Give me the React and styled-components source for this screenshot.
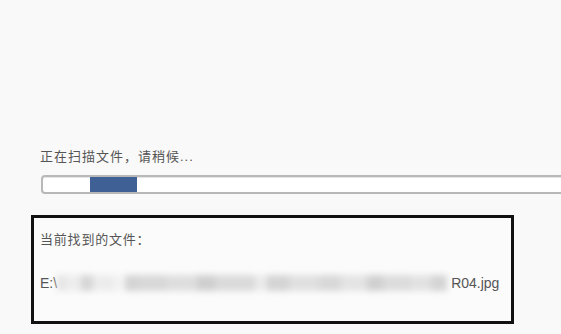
import React from 'react';
import styled, { createGlobalStyle } from 'styled-components';

const GlobalStyle = createGlobalStyle`
  html, body {
    margin: 0;
    padding: 0;
    background: #f9f9f9;
    overflow: hidden;
  }
  body {
    font-family: "Liberation Sans", "Noto Sans CJK SC", sans-serif;
  }
`;

const Page = styled.div`
  width: 561px;
  height: 334px;
  padding: 148px 0 0 31px;
  box-sizing: border-box;
  overflow: hidden;
`;

const StatusText = styled.div`
  margin-left: 9px;
  font-size: 13px;
  letter-spacing: 1px;
  line-height: 18px;
  color: #555;
`;

const Track = styled.div`
  position: relative;
  margin: 9px 0 0 10px;
  width: 560px;
  height: 19px;
  box-sizing: border-box;
  background: #fff;
  border: 2px solid #b8b8b8;
  border-radius: 4px;
  box-shadow: inset 0 1px 0 #e6e6e6;
`;

const Fill = styled.div`
  position: absolute;
  top: 0;
  bottom: 0;
  left: ${(p) => p.left}px;
  width: ${(p) => p.width}px;
  background: #3f6094;
`;

const FoundBox = styled.div`
  margin-top: 21px;
  width: 483px;
  height: 109px;
  box-sizing: border-box;
  border: 3px solid #111;
  background: #fbfbfb;
  padding: 13px 0 0 6px;
  color: #555;
  font-size: 13px;
`;

const Label = styled.div`
  line-height: 18px;
  letter-spacing: 0.8px;
`;

const PathRow = styled.div`
  margin-top: 23px;
  display: flex;
  align-items: center;
  height: 22px;
  font-size: 14px;
`;

const Blur = styled.div`
  display: flex;
  align-items: center;
  width: ${(p) => p.width}px;
  height: 22px;
  filter: blur(3px);
`;

const Blob = styled.span`
  display: block;
  height: ${(p) => p.h || 16}px;
  width: ${(p) => p.w}px;
  background: ${(p) => p.c};
`;

const blobs = [
  { w: 8, c: '#e4e4e4' },
  { w: 16, c: '#ededed' },
  { w: 12, c: '#d6d6d6' },
  { w: 22, c: '#ececec' },
  { w: 10, c: '#f4f4f4' },
  { w: 14, c: '#d4d4d4' },
  { w: 28, c: '#d8d8d8' },
  { w: 30, c: '#dedede' },
  { w: 18, c: '#cfcfcf' },
  { w: 40, c: '#dadada' },
  { w: 12, c: '#ebebeb' },
  { w: 22, c: '#d4d4d4' },
  { w: 30, c: '#e0e0e0' },
  { w: 22, c: '#d8d8d8' },
  { w: 26, c: '#e4e4e4' },
  { w: 16, c: '#d0d0d0' },
  { w: 28, c: '#dcdcdc' },
  { w: 20, c: '#e2e2e2' },
  { w: 16, c: '#d4d4d4' },
];

export default function App() {
  return (
    <>
      <GlobalStyle />
      <Page>
        <StatusText>正在扫描文件，请稍候...</StatusText>
        <Track>
          <Fill left={47} width={47} />
        </Track>
        <FoundBox>
          <Label>当前找到的文件：</Label>
          <PathRow>
            <span>E:\</span>
            <Blur width={394}>
              {blobs.map((b, i) => (
                <Blob key={i} w={b.w} c={b.c} />
              ))}
            </Blur>
            <span>R04.jpg</span>
          </PathRow>
        </FoundBox>
      </Page>
    </>
  );
}
